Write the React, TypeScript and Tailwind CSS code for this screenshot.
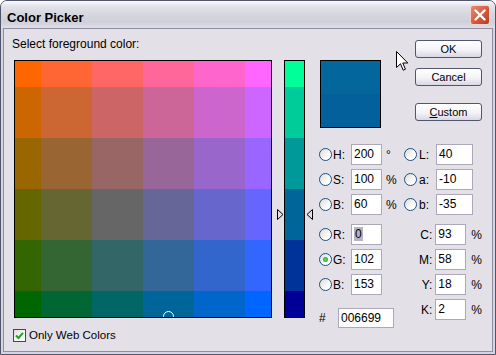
import React from 'react';

const FONT = "font-['Liberation_Sans',Arial,sans-serif]";

// web-snapped bands: 00/FF at the ends get half a cell
const ROWS = 'grid-rows-[1fr_2fr_2fr_2fr_2fr_1fr]';
const STEPS = ['00', '33', '66', '99', 'CC', 'FF'];

function Radio({ checked = false }: { checked?: boolean }) {
  return (
    <span className="w-[13px] h-[13px] shrink-0 rounded-full border border-[#1c5180] bg-[linear-gradient(135deg,#dcdbd5,#ffffff_70%)] flex items-center justify-center">
      {checked && <span className="w-[5px] h-[5px] rounded-full bg-[radial-gradient(circle,#5fe05f,#1c9a1c)]" />}
    </span>
  );
}

function Box({ className, children }: { className: string; children: React.ReactNode }) {
  return (
    <div className={`h-[21px] shrink-0 border border-[#aca8ba] bg-white text-[12px] leading-[19px] pl-[2px] ${className}`}>
      {children}
    </div>
  );
}

function Btn({ children }: { children: React.ReactNode }) {
  return (
    <div className="h-[18px] w-[67px] rounded-[3px] border border-[#4f566e] bg-[linear-gradient(to_bottom,#ffffff,#f4f3f7_55%,#d9d7e3)] text-[11px] leading-[16px] text-center">
      {children}
    </div>
  );
}

function HsbRow({ a, av, unit, b, bv }: { a: string; av: string; unit: string; b: string; bv: string }) {
  return (
    <div className="flex items-center h-[21px] text-[12px]">
      <Radio />
      <span className="w-[19px] pl-[1px]">{a}</span>
      <Box className="w-[31px]">{av}</Box>
      <span className="w-[22px] pl-[4px]">{unit}</span>
      <Radio />
      <span className="w-[19px] pl-[2px]">{b}</span>
      <Box className="w-[37px]">{bv}</Box>
    </div>
  );
}

function RgbRow({ label, value, checked = false }: { label: string; value: React.ReactNode; checked?: boolean }) {
  return (
    <div className="flex items-center h-[21px] text-[12px]">
      <Radio checked={checked} />
      <span className="w-[19px] pl-[1px]">{label}</span>
      <Box className="w-[31px]">{value}</Box>
    </div>
  );
}

function CmykRow({ label, value }: { label: string; value: string }) {
  return (
    <div className="flex items-center h-[21px] text-[12px]">
      <span className="w-[32px] pr-[3px] text-right">{label}</span>
      <Box className="w-[31px]">{value}</Box>
      <span className="pl-[5px]">%</span>
    </div>
  );
}

export default function App() {
  const reds = [...STEPS].reverse();
  return (
    <div className={`${FONT} relative w-[496px] h-[355px] flex flex-col border border-[#50556a] rounded-t-[7px] overflow-hidden bg-[#d6d5df] text-black`}>
      {/* title bar */}
      <div className="h-[27px] shrink-0 flex items-start justify-between pl-[6px] pr-[5px] bg-[linear-gradient(to_bottom,#fbfbfd_0%,#e3e3eb_18%,#d6d6e0_50%,#d0d0db_78%,#dedee6_100%)]">
        <span className="pt-[9px] text-[13px] leading-[15px] font-bold">Color Picker</span>
        <div className="mt-[4px] w-[20px] h-[20px] rounded-[3px] border border-[#f4d4cc] bg-[linear-gradient(135deg,#ec8a73,#d45a3c_55%,#b83a22)] flex items-center justify-center">
          <svg width="12" height="12" viewBox="0 0 12 12">
            <path d="M1.5 1.5 L10.5 10.5 M10.5 1.5 L1.5 10.5" stroke="#ffffff" strokeWidth="2.4" strokeLinecap="round" />
          </svg>
        </div>
      </div>

      {/* frame + body */}
      <div className="flex-1 px-[2px] pb-[2px] flex">
        <div className="flex-1 flex border border-[#8f8da3] bg-[#e4e0e7]">
          {/* left: color field and slider */}
          <div className="flex flex-col pl-[8px] pt-[8px]">
            <div className="h-[14px] text-[12px] leading-[14px]">Select foreground color:</div>
            <div className="flex mt-[9px] ml-[2px]">
              <div className="relative w-[258px] h-[258px] border border-black overflow-hidden">
                <div className={`grid grid-cols-[1fr_2fr_2fr_2fr_2fr_1fr] ${ROWS} w-full h-full`}>
                  {reds.map((r) =>
                    STEPS.map((b) => (
                      <div key={r + b} style={{ background: `#${r}66${b}` }} />
                    ))
                  )}
                </div>
                <span className="absolute left-[148px] top-[250px] w-[11px] h-[11px] rounded-full border border-white" />
              </div>
              <div className="relative ml-[12px] w-[21px] h-[258px] border border-black">
                <div className={`grid ${ROWS} w-full h-full`}>
                  {reds.map((g) => (
                    <div key={g} style={{ background: `#00${g}99` }} />
                  ))}
                </div>
                <svg className="absolute left-[-8px] top-[148px]" width="7" height="11" viewBox="0 0 7 11">
                  <path d="M0.5 0.5 L6 5.5 L0.5 10.5 Z" fill="#e4e0e7" stroke="#000" />
                </svg>
                <svg className="absolute left-[21px] top-[148px]" width="7" height="11" viewBox="0 0 7 11">
                  <path d="M6.5 0.5 L1 5.5 L6.5 10.5 Z" fill="#e4e0e7" stroke="#000" />
                </svg>
              </div>
            </div>
            <div className="flex items-center mt-[10px] ml-[1px]">
              <span className="w-[13px] h-[13px] border border-[#1c5180] bg-[linear-gradient(135deg,#dcdbd5,#ffffff_70%)] flex items-center justify-center">
                <svg width="9" height="9" viewBox="0 0 9 9">
                  <path d="M1 4.5 L3.5 7 L8 1.8" fill="none" stroke="#21a121" strokeWidth="2" />
                </svg>
              </span>
              <span className="ml-[3px] text-[11.5px] leading-[14px]">Only Web Colors</span>
            </div>
          </div>

          {/* right: swatch, buttons, values */}
          <div className="flex flex-col ml-[14px] pt-[11px] w-[163px]">
            <div className="flex justify-between items-start h-[88px]">
              <div className="mt-[20px] ml-[1px] w-[61px] h-[68px] border border-black flex flex-col">
                <div className="flex-1 bg-[#03679b]" />
                <div className="flex-1 bg-[#04609a]" />
              </div>
              <div className="flex flex-col">
                <Btn>OK</Btn>
                <div className="mt-[10px]"><Btn>Cancel</Btn></div>
                <div className="mt-[17px]"><Btn><span className="underline">C</span>ustom</Btn></div>
              </div>
            </div>

            <div className="flex flex-col gap-[4px] mt-[16px]">
              <HsbRow a="H:" av="200" unit="°" b="L:" bv="40" />
              <HsbRow a="S:" av="100" unit="%" b="a:" bv="-10" />
              <HsbRow a="B:" av="60" unit="%" b="b:" bv="-35" />
            </div>

            <div className="flex mt-[9px]">
              <div className="w-[85px] flex flex-col gap-[4px]">
                <RgbRow label="R:" value={<span className="bg-[#b6b4c0] px-[1px]">0</span>} />
                <RgbRow label="G:" value="102" checked />
                <RgbRow label="B:" value="153" />
                <div className="flex items-center mt-[9px] text-[12px]">
                  <span className="w-[19px]">#</span>
                  <Box className="w-[56px] !h-[20px] !leading-[18px]">006699</Box>
                </div>
              </div>
              <div className="flex flex-col gap-[4px]">
                <CmykRow label="C:" value="93" />
                <CmykRow label="M:" value="58" />
                <CmykRow label="Y:" value="18" />
                <CmykRow label="K:" value="2" />
              </div>
            </div>
          </div>
        </div>
      </div>

      {/* mouse pointer */}
      <svg className="absolute left-[395px] top-[50px]" width="13" height="21" viewBox="0 0 13 21">
        <path d="M0.5 0.5 V16.5 L4.5 12.8 L7.2 19.2 L9.4 18.2 L6.8 12 H11.8 Z" fill="#ffffff" stroke="#000" />
      </svg>
    </div>
  );
}
